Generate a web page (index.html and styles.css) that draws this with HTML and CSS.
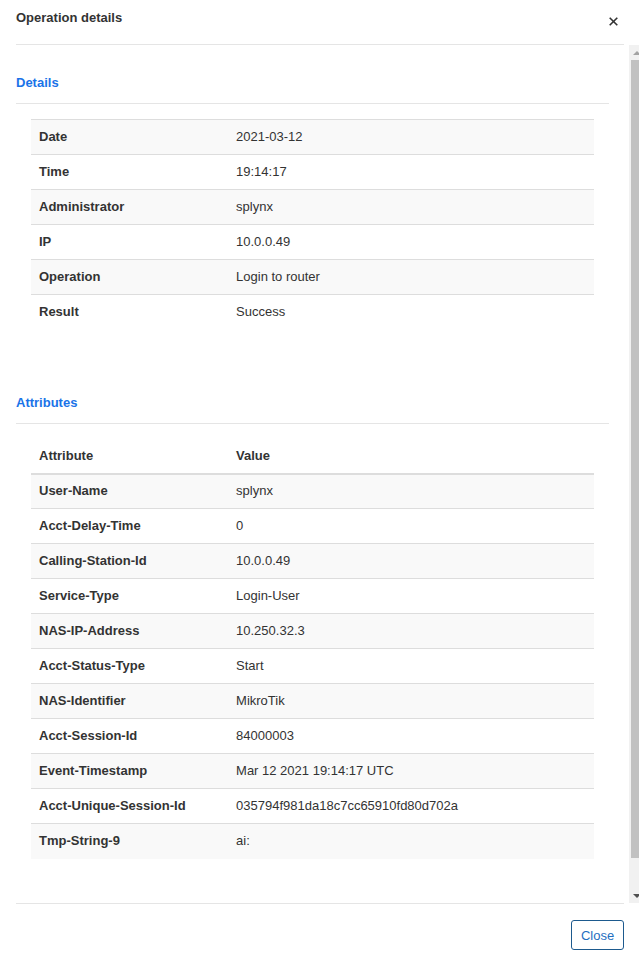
FILE: index.html
```html
<!DOCTYPE html>
<html lang="en">
<head>
<meta charset="utf-8">
<title>Operation details</title>
<link rel="stylesheet" href="styles.css">
</head>
<body>
<div class="modal">
  <div class="modal-header">
    <h4 class="modal-title">Operation details</h4>
    <button class="btn-x" type="button" aria-label="Close">
      <svg width="9" height="9" viewBox="0 0 9 9"><path d="M0.7 0.7L8.3 8.3M8.3 0.7L0.7 8.3" stroke="#333" stroke-width="1.6"/></svg>
    </button>
  </div>
  <div class="modal-main">
    <div class="modal-body">
      <section class="panel">
        <h5 class="panel-title">Details</h5>
        <table class="tbl">
          <colgroup><col class="col-key"><col></colgroup>
          <tbody>
            <tr><th>Date</th><td>2021-03-12</td></tr>
            <tr><th>Time</th><td>19:14:17</td></tr>
            <tr><th>Administrator</th><td>splynx</td></tr>
            <tr><th>IP</th><td>10.0.0.49</td></tr>
            <tr><th>Operation</th><td>Login to router</td></tr>
            <tr><th>Result</th><td>Success</td></tr>
          </tbody>
        </table>
      </section>
      <section class="panel">
        <h5 class="panel-title">Attributes</h5>
        <table class="tbl tbl-head">
          <colgroup><col class="col-key"><col></colgroup>
          <thead>
            <tr><th>Attribute</th><th>Value</th></tr>
          </thead>
          <tbody>
            <tr><th>User-Name</th><td>splynx</td></tr>
            <tr><th>Acct-Delay-Time</th><td>0</td></tr>
            <tr><th>Calling-Station-Id</th><td>10.0.0.49</td></tr>
            <tr><th>Service-Type</th><td>Login-User</td></tr>
            <tr><th>NAS-IP-Address</th><td>10.250.32.3</td></tr>
            <tr><th>Acct-Status-Type</th><td>Start</td></tr>
            <tr><th>NAS-Identifier</th><td>MikroTik</td></tr>
            <tr><th>Acct-Session-Id</th><td>84000003</td></tr>
            <tr><th>Event-Timestamp</th><td>Mar 12 2021 19:14:17 UTC</td></tr>
            <tr><th>Acct-Unique-Session-Id</th><td>035794f981da18c7cc65910fd80d702a</td></tr>
            <tr><th>Tmp-String-9</th><td>ai:</td></tr>
          </tbody>
        </table>
      </section>
    </div>
    <div class="scrollbar" aria-hidden="true">
      <div class="sb-btn sb-up"><span class="tri tri-up"></span></div>
      <div class="sb-track"><div class="sb-thumb"></div></div>
      <div class="sb-btn sb-down"><span class="tri tri-down"></span></div>
    </div>
  </div>
  <div class="modal-footer">
    <button class="btn-close" type="button">Close</button>
  </div>
</div>
</body>
</html>
```
FILE: styles.css
```css
html, body {
  margin: 0;
  padding: 0;
  overflow: hidden;
  background: #fff;
}
body {
  font-family: "Liberation Sans", Arial, sans-serif;
  font-size: 13px;
  color: #333;
}
.modal {
  display: flex;
  flex-direction: column;
  height: 959px;
  width: 639px;
}
.modal-header {
  box-sizing: border-box;
  height: 45px;
  margin: 0 15px 0 16px;
  padding-top: 10px;
  border-bottom: 1px solid #e5e5e5;
  display: flex;
  justify-content: space-between;
  align-items: flex-start;
}
.modal-title {
  margin: 0;
  font-size: 13px;
  line-height: 16px;
  font-weight: bold;
  color: #333;
}
.btn-x {
  border: 0;
  background: none;
  padding: 0;
  margin: 7px 6px 0 0;
  width: 9px;
  height: 9px;
  display: flex;
}
.modal-main {
  flex: 1;
  min-height: 0;
  display: flex;
}
.modal-body {
  flex: 1;
  min-width: 0;
  overflow: hidden;
  padding: 0 20px 0 16px;
}
.panel {
  padding-top: 30px;
}
.panel + .panel {
  padding-top: 65px;
}
.panel-title {
  margin: 0;
  padding-bottom: 12px;
  border-bottom: 1px solid #e5e5e5;
  font-size: 13px;
  line-height: 16px;
  font-weight: bold;
  color: #1a73e8;
}
.tbl {
  width: calc(100% - 30px);
  margin: 15px 15px 0;
  border-collapse: collapse;
  table-layout: fixed;
}
.col-key {
  width: 35%;
}
.tbl th, .tbl td {
  box-sizing: border-box;
  height: 35px;
  padding: 0 8px;
  text-align: left;
  vertical-align: middle;
  border-top: 1px solid #ddd;
  line-height: 16px;
  color: #333;
}
.tbl th {
  font-weight: bold;
}
.tbl td {
  font-weight: normal;
}
.tbl tbody tr:nth-child(odd) {
  background: #f9f9f9;
}
.tbl-head thead th {
  border-top: 0;
  height: 35px;
  border-bottom: 2px solid #ddd;
}
.tbl-head tbody tr:first-child th,
.tbl-head tbody tr:first-child td {
  border-top: 0;
  height: 35px;
}
.scrollbar {
  width: 10px;
  overflow: hidden;
  background: #f1f1f1;
  display: flex;
  flex-direction: column;
}
.sb-btn {
  width: 15px;
  height: 15px;
  flex: none;
  display: flex;
  align-items: center;
  justify-content: center;
}
.tri {
  width: 0;
  height: 0;
  border-left: 4px solid transparent;
  border-right: 4px solid transparent;
}
.tri-up {
  border-bottom: 4px solid #a3a3a3;
}
.tri-down {
  border-top: 4px solid #505050;
}
.sb-track {
  flex: 1;
  padding: 0 0 30px 2px;
  display: flex;
}
.sb-thumb {
  flex: 1;
  background: #c1c1c1;
}
.modal-footer {
  margin: 0 15px 0 16px;
  border-top: 1px solid #e5e5e5;
  padding: 16px 0 9px;
  display: flex;
  justify-content: flex-end;
}
.btn-close {
  box-sizing: border-box;
  height: 30px;
  width: 53px;
  padding: 0;
  border: 1px solid #1d5a8e;
  border-radius: 3px;
  background: #fff;
  color: #1f6fbf;
  font-family: "Liberation Sans", Arial, sans-serif;
  font-size: 13px;
}
```
